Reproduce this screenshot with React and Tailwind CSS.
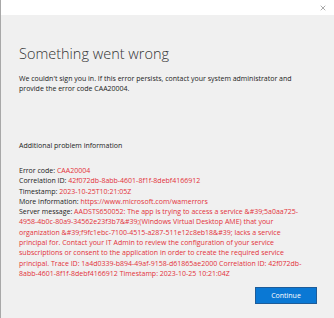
import { X } from 'lucide-react'

const details = [
  { label: 'Error code:', value: 'CAA20004' },
  { label: 'Correlation ID:', value: '42f072db-8abb-4601-8f1f-8debf4166912' },
  { label: 'Timestamp:', value: '2023-10-25T10:21:05Z' },
  { label: 'More information:', value: 'https://www.microsoft.com/wamerrors' },
]

const serverMessage =
  "AADSTS650052: The app is trying to access a service &#39;5a0aa725-4958-4b0c-80a9-34562e23f3b7&#39;(Windows Virtual Desktop AME) that your organization &#39;f9fc1ebc-7100-4515-a287-511e12c8eb18&#39; lacks a service principal for. Contact your IT Admin to review the configuration of your service subscriptions or consent to the application in order to create the required service principal. Trace ID: 1a4d0339-b894-49af-9158-d61865ae2000 Correlation ID: 42f072db-8abb-4601-8f1f-8debf4166912 Timestamp: 2023-10-25 10:21:04Z"

export default function App() {
  return (
    <div className="w-[334px] h-[318px] flex flex-col border-l border-[#a8a8a8] bg-[#f0f0f0] overflow-hidden text-[#222]" style={{ fontFamily: '"Open Sans", "Noto Sans", sans-serif' }}>
      <div className="h-[15px] bg-white flex items-center justify-end pr-[7px] flex-shrink-0">
        <X size={8} strokeWidth={1.5} className="text-[#555]" />
      </div>
      <div className="flex-1 flex flex-col pl-[18px] pr-[24px]">
        <h1 className="mt-[30px] text-[14.5px] font-light leading-[17px] text-[#333]">Something went wrong</h1>
        <p className="mt-[12px] text-[7px] leading-[9.5px] -mr-[8px]">
          We couldn't sign you in. If this error persists, contact your system administrator and provide the error code CAA20004.
        </p>
        <p className="mt-[48px] text-[7px] leading-[10px]">Additional problem information</p>
        <div className="mt-[15px] text-[7px] leading-[10.3px]">
          {details.map(d => (
            <p key={d.label}>{d.label} <span className="text-[#e3303a]">{d.value}</span></p>
          ))}
          <p>Server message: <span className="text-[#e3303a]">{serverMessage}</span></p>
        </div>
        <div className="mt-[8px] flex justify-end -mr-[7px]">
          <button className="w-[62px] h-[17px] bg-[#0a78d4] border border-[#1d5c99] text-white text-[7px] leading-none">Continue</button>
        </div>
      </div>
    </div>
  )
}
